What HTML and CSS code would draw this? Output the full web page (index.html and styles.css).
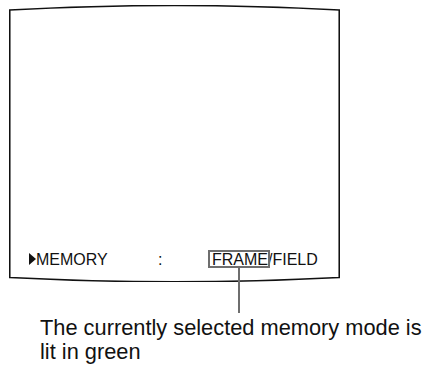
FILE: index.html
```html
<!DOCTYPE html>
<html>
<head>
<meta charset="utf-8">
<link rel="stylesheet" href="styles.css">
</head>
<body>
<div class="figure">
  <div class="screen">
    <svg class="outline" viewBox="0 0 331 277" width="331" height="277" aria-hidden="true">
      <path d="M0.75 5 Q165.5 -4 330.25 5 L330.25 272.5 Q165.5 281 0.75 272.5 Z" fill="none" stroke="#111" stroke-width="1.6"/>
    </svg>
    <div class="menu-row">
      <span class="item"><span class="cursor"></span>MEMORY</span>
      <span class="colon">:</span>
      <span class="value"><span class="selected">FRAME</span>/FIELD</span>
    </div>
  </div>
  <p class="caption">The currently selected memory mode is<br>lit in green</p>
</div>
</body>
</html>
```

FILE: styles.css
```css
html, body {
  margin: 0;
  padding: 0;
  background: #fff;
}

body {
  font-family: "Liberation Sans", Arial, sans-serif;
  color: #111;
  width: 428px;
  height: 370px;
  overflow: hidden;
}

.figure {
  padding-top: 5px;
}

.screen {
  position: relative;
  margin-left: 9px;
  width: 331px;
  height: 277px;
  display: flex;
  flex-direction: column;
  justify-content: flex-end;
}

.outline {
  position: absolute;
  left: 0;
  top: 0;
}

.menu-row {
  display: grid;
  grid-template-columns: 129px 50px auto;
  align-items: baseline;
  padding-left: 20px;
  padding-bottom: 13px;
  font-size: 16px;
  line-height: 18px;
}

.item {
  display: flex;
  align-items: baseline;
}

.cursor {
  display: inline-block;
  width: 0;
  height: 0;
  border-top: 6px solid transparent;
  border-bottom: 6px solid transparent;
  border-left: 7px solid #111;
  margin-bottom: -1px;
}

.value {
  white-space: nowrap;
}

.selected {
  position: relative;
  display: inline-block;
  border: 2px solid #6e6e6e;
  padding: 1px 0 0 2px;
  line-height: 13px;
  margin-right: -2px;
}

.selected::after {
  content: "";
  position: absolute;
  left: 50%;
  top: 100%;
  width: 2px;
  margin-left: -1px;
  height: 47px;
  background: #6e6e6e;
}

.caption {
  margin: 34px 0 0 40px;
  font-size: 21.8px;
  line-height: 24px;
}
```
